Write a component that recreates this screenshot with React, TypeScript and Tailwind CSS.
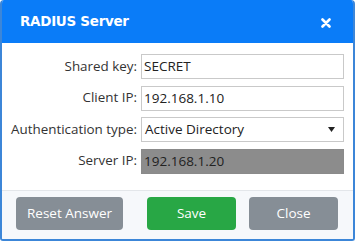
import React from "react";

const font = { fontFamily: '"Open Sans", "Noto Sans", sans-serif' };

function Row({ label, children }: { label: string; children: React.ReactNode }) {
  return (
    <div className="flex items-center h-[25px]">
      <div className="w-[139px] shrink-0 text-right pr-[4px] text-[13.4px] text-[#333] leading-none">{label}</div>
      {children}
    </div>
  );
}

export default function App() {
  return (
    <div className="w-[355px] h-[241px] bg-white" style={font}>
      <div className="w-[355px] h-[241px] border-x-2 border-b-2 border-[#3c86d8] rounded-t-[4px] rounded-b-[3px] flex flex-col overflow-hidden">
        <div className="h-[43px] bg-[#0a7cf8] flex items-center justify-between pl-[18px] pr-[22px] shrink-0">
          <span className="text-white font-bold text-[13.5px] tracking-[-0.3px]" style={{ fontFamily: '"DejaVu Sans", sans-serif' }}>RADIUS Server</span>
          <svg width="10" height="10" viewBox="0 0 10 10" className="mt-[2px]">
            <path d="M1.5 1.5 L8.5 8.5 M8.5 1.5 L1.5 8.5" stroke="white" strokeWidth="2.6" strokeLinecap="round" />
          </svg>
        </div>
        <div className="flex flex-col gap-[6.5px] pt-[11px] pb-[16px] pr-[9px] bg-white">
          <Row label="Shared key:">
            <div className="flex-1 h-[25px] border border-[#c9c9c9] flex items-center pl-[2px] text-[13.5px] text-[#222]">SECRET</div>
          </Row>
          <Row label="Client IP:">
            <div className="flex-1 h-[25px] border border-[#c9c9c9] flex items-center pl-[2px] text-[13.5px] text-[#222]">192.168.1.10</div>
          </Row>
          <Row label="Authentication type:">
            <div className="flex-1 h-[25px] border border-[#c9c9c9] flex items-center justify-between pl-[3px] pr-[8px] text-[13.5px] text-[#222]">
              <span>Active Directory</span>
              <svg width="7" height="5" viewBox="0 0 7 5"><path d="M0 0 H7 L3.5 5 Z" fill="#222" /></svg>
            </div>
          </Row>
          <Row label="Server IP:">
            <div className="flex-1 h-[25px] border border-[#8a8a8a] bg-[#8c8c8c] flex items-center pl-[2px] text-[13.5px] text-[#222]">192.168.1.20</div>
          </Row>
        </div>
        <div className="flex-1 border-t border-[#e3e6ea] bg-[#f6f8fb] flex items-start pt-[6px] pl-[14px] gap-[24px]">
          <div className="w-[107px] h-[33px] rounded-[4px] bg-[#868e96] text-white text-[13.5px] flex items-center justify-center">Reset Answer</div>
          <div className="w-[89px] h-[33px] rounded-[4px] bg-[#28a745] text-white text-[13.5px] flex items-center justify-center">Save</div>
          <div className="w-[89px] h-[33px] rounded-[4px] bg-[#868e96] text-white text-[13.5px] flex items-center justify-center -ml-[11px]">Close</div>
        </div>
      </div>
    </div>
  );
}
